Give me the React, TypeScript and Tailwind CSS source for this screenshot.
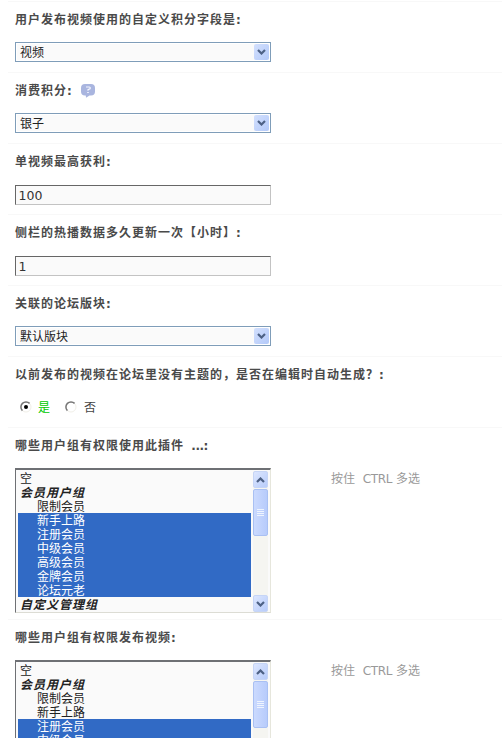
import React from "react";

type Option = { name: string; type?: "group" | "item"; selected?: boolean };

const usePlugin: Option[] = [
  { name: "空" },
  { name: "会员用户组", type: "group" },
  { name: "限制会员", type: "item" },
  { name: "新手上路", type: "item", selected: true },
  { name: "注册会员", type: "item", selected: true },
  { name: "中级会员", type: "item", selected: true },
  { name: "高级会员", type: "item", selected: true },
  { name: "金牌会员", type: "item", selected: true },
  { name: "论坛元老", type: "item", selected: true },
  { name: "自定义管理组", type: "group" },
];

// only the part of the list that is above the fold
const publishVideo: Option[] = usePlugin
  .slice(0, 6)
  .map((option) =>
    option.name === "新手上路" ? { ...option, selected: false } : option
  );

const Chevron = ({ up = false }: { up?: boolean }) => (
  <svg width="9" height="6" viewBox="0 0 9 6" className={up ? "rotate-180" : ""}>
    <path d="M1 1l3.5 3.5L8 1" fill="none" stroke="#4d6185" strokeWidth="2.2" />
  </svg>
);

const HelpIcon = () => (
  <svg width="14" height="14" viewBox="0 0 14 14" className="ml-[10px]">
    <path
      d="M4 0h6Q14 0 14 4v3.5Q14 11.5 10 11.5H8.5L5 13.8 4.8 11.5H4Q0 11.5 0 7.5V4Q0 0 4 0z"
      fill="#a9b5df"
    />
    <path
      d="M5 3h3.3q1 0 1 1t-1 1.1L7 5.6v1.2M6.2 8.5h1.6"
      fill="none"
      stroke="#f4f6ff"
      strokeWidth="1.2"
    />
  </svg>
);

const Row = ({
  label,
  suffix = ":",
  help,
  tall,
  children,
}: {
  label: string;
  suffix?: string;
  help?: boolean;
  tall?: boolean;
  children: React.ReactNode;
}) => (
  <div
    className={`ml-2 shrink-0 border-t border-[#f8f8f8] pl-[7px] ${
      tall ? "h-[192px]" : "h-[71px]"
    }`}
  >
    <div className="flex h-[40px] items-center pb-[4px] font-bold whitespace-pre text-[#4a4a4a]">
      <span className="tracking-[1px]">{label}</span>
      <span className="tracking-[-0.5px]">{suffix}</span>
      {help && <HelpIcon />}
    </div>
    {children}
  </div>
);

const Select = ({ value }: { value: string }) => (
  <div className="flex h-5 w-64 items-center justify-between border border-[#7f9db9] bg-[#fafafa] pr-px pl-[4px] text-[#222] shadow-[inset_0_0_0_1px_#fff]">
    <span className="pt-[2px]">{value}</span>
    <span className="flex h-4 w-[15px] items-center justify-center rounded-[2px] bg-linear-to-br from-[#d3e0fd] to-[#b3c9f9]">
      <Chevron />
    </span>
  </div>
);

const Input = ({ value }: { value: string }) => (
  <div className="mt-px flex h-5 w-64 items-center border border-t-[#666] border-r-[#c3c3c3] border-b-[#c3c3c3] border-l-[#666] bg-[#fafafa] pt-[2px] pl-[2.5px] text-[12.5px] text-[#333]">
    {value}
  </div>
);

const Radio = ({ checked }: { checked?: boolean }) => (
  <svg width="12" height="12" viewBox="0 0 12 12">
    <circle cx="6" cy="6" r="5" fill="#fff" stroke="#f1efe8" />
    <path d="M2.4 9.6A5 5 0 0 1 9.6 2.4" fill="none" stroke="#777" strokeWidth="1.5" />
    {checked && <circle cx="6" cy="6" r="2" fill="#000" />}
  </svg>
);

const ScrollButton = ({ up }: { up?: boolean }) => (
  <div className="flex h-[17px] shrink-0 items-center justify-center rounded-[2px] border border-[#c6d5f6] bg-linear-to-br from-[#dce6fe] to-[#b8ccfa]">
    <Chevron up={up} />
  </div>
);

const ListBox = ({ options }: { options: Option[] }) => (
  <div className="flex">
    <div className="flex h-[145px] w-64 border border-t-2 border-t-[#6e7074] border-r-[#e6e6dc] border-b-[#dcdcd4] border-l-[#6e7074] bg-[#fafafa] pt-px pr-px pl-[2px]">
      <div className="w-[233px] text-[#222]">
        {options.map((option, index) => (
          <div
            key={index}
            className={`flex h-[14px] items-center pt-[2px] ${
              option.selected ? "bg-[#316ac5] text-white" : ""
            } ${
              option.type === "group"
                ? "pl-[2px] font-bold tracking-[1px] italic"
                : option.type === "item"
                  ? "pl-[19px]"
                  : "pl-[2px]"
            }`}
          >
            {option.name}
          </div>
        ))}
      </div>
      <div className="ml-[2px] flex h-[141px] w-[15px] flex-col bg-[#f5f5f1]">
        <ScrollButton up />
        <div className="mt-px flex h-[47px] flex-col items-center justify-center gap-px rounded-[2px] border border-[#a9c0f3] bg-linear-to-r from-[#cbdafe] to-[#b7cbfb]">
          <i className="h-px w-[7px] bg-[#eef4fe]" />
          <i className="h-px w-[7px] bg-[#eef4fe]" />
          <i className="h-px w-[7px] bg-[#eef4fe]" />
          <i className="h-px w-[7px] bg-[#eef4fe]" />
        </div>
        <div className="flex-1" />
        <ScrollButton />
      </div>
    </div>
    <p className="ml-[60px] pt-[2px] whitespace-pre text-[#999]">
      按住  <span className="tracking-[-0.3px]">CTRL</span> 多选
    </p>
  </div>
);

const App = () => {
  return (
    <div className="flex h-[738px] w-[502px] flex-col overflow-hidden bg-white pt-px font-['DejaVu_Sans','Noto_Sans_CJK_SC',sans-serif] text-[12px] leading-[18px]">
      <Row label="用户发布视频使用的自定义积分字段是">
        <Select value="视频" />
      </Row>
      <Row label="消费积分" help>
        <Select value="银子" />
      </Row>
      <Row label="单视频最高获利">
        <Input value="100" />
      </Row>
      <Row label="侧栏的热播数据多久更新一次【小时】">
        <Input value="1" />
      </Row>
      <Row label="关联的论坛版块">
        <Select value="默认版块" />
      </Row>
      <Row label="以前发布的视频在论坛里没有主题的，是否在编辑时自动生成？">
        <div className="flex h-5 items-center pl-[5px] text-[#444]">
          <Radio checked />
          <span className="ml-[6px] pt-[2px] text-[#00c800]">是</span>
          <span className="ml-[15px] flex items-center gap-[7px]">
            <Radio />
            <span className="pt-[2px]">否</span>
          </span>
        </div>
      </Row>
      <Row label="哪些用户组有权限使用此插件" suffix="  ...:" tall>
        <ListBox options={usePlugin} />
      </Row>
      <Row label="哪些用户组有权限发布视频" tall>
        <ListBox options={publishVideo} />
      </Row>
    </div>
  );
};

export default App;
